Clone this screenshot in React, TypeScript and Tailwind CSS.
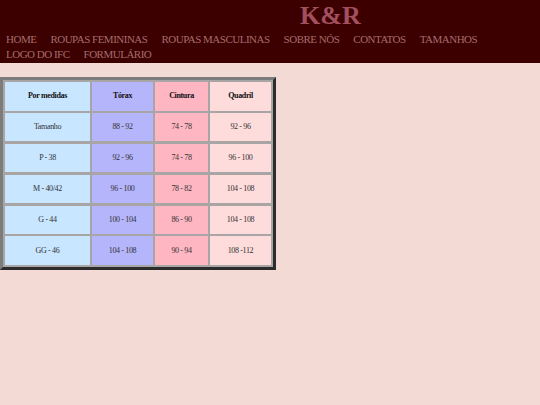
import React from 'react';

const nav = ['HOME', 'ROUPAS FEMININAS', 'ROUPAS MASCULINAS', 'SOBRE NÓS', 'CONTATOS', 'TAMANHOS', 'LOGO DO IFC', 'FORMULÁRIO'];

const head = ['Por medidas', 'Tórax', 'Cintura', 'Quadril'];

const rows = [
  ['Tamanho', '88 - 92', '74 - 78', '92 - 96'],
  ['P - 38', '92 - 96', '74 - 78', '96 - 100'],
  ['M - 40/42', '96 - 100', '78 - 82', '104 - 108'],
  ['G - 44', '100 - 104', '86 - 90', '104 - 108'],
  ['GG - 46', '104 - 108', '90 - 94', '108 -112'],
];

const colBg = ['bg-[#c8e6ff]', 'bg-[#b5b5fc]', 'bg-[#feb6c2]', 'bg-[#fedcdc]'];

const App: React.FC = () => {
  return (
    <div className="min-h-[405px] bg-[#f4dad5] font-['Liberation_Serif',serif]">
      <header className="bg-[#3c0000] pt-[3px] pb-[1px]">
        <h1 className="pl-[300px] text-[26px] leading-[26px] font-bold text-[#a24f5f]">K&amp;R</h1>
        <nav className="mt-[3px] flex flex-wrap gap-x-[14px] px-[6px] text-[11px] leading-[15px] tracking-[-0.5px] text-[#a46d6d]">
          {nav.map((item) => (
            <a key={item} href="#" className="whitespace-nowrap">
              {item}
            </a>
          ))}
        </nav>
      </header>

      <div className="pt-[14px]">
        <div className="inline-block border-[3px] border-t-[#7c7c7c] border-l-[#7c7c7c] border-r-[#2c2c2c] border-b-[#2c2c2c] bg-[#aaa5a5] p-[2px]">
          <div className="grid grid-cols-[85px_61px_53px_61px] auto-rows-[28.5px] gap-x-[2px] gap-y-[2.4px] text-[8px] tracking-[-0.35px] text-[#333]">
            {head.map((h, i) => (
              <div key={h} className={`${colBg[i]} flex items-center justify-center font-bold text-[#111]`}>
                {h}
              </div>
            ))}
            {rows.map((r) =>
              r.map((c, i) => (
                <div key={r[0] + i} className={`${colBg[i]} flex items-center justify-center`}>
                  {c}
                </div>
              ))
            )}
          </div>
        </div>
      </div>
    </div>
  );
};

export default App;
